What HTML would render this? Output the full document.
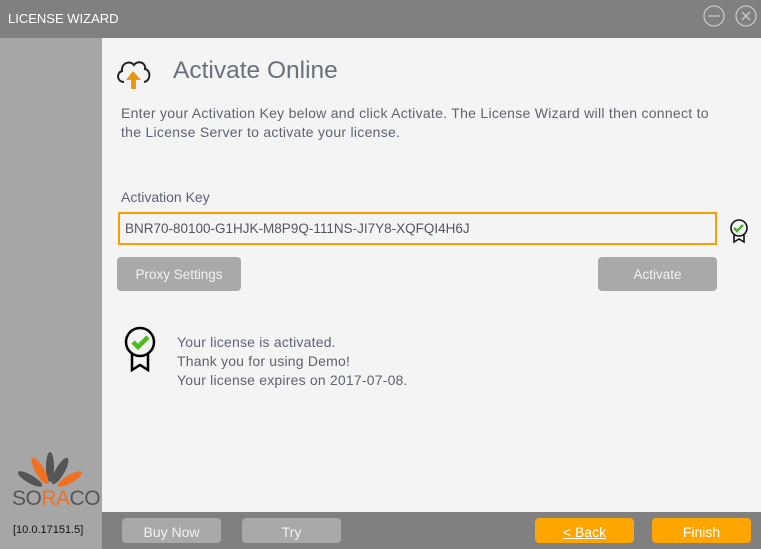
<!DOCTYPE html>
<html><head><style>
*{margin:0;padding:0;box-sizing:border-box}
body{width:761px;height:549px;overflow:hidden;background:#f4f4f4;font-family:"Liberation Sans",sans-serif;position:relative}
.abs{position:absolute}
.btn{position:absolute;background:#a9a9a9;border-radius:4px;color:#f2f2f2;font-size:13.5px;text-align:center}
.txt{color:#5f6270;font-size:13.5px}
</style></head><body>
<div class="abs" style="left:0;top:0;width:761px;height:38px;background:#808080"></div>
<div class="abs" style="left:8px;top:11px;color:#fff;font-size:13px">LICENSE WIZARD</div>
<svg class="abs" style="left:702px;top:5px" width="56" height="24">
<circle cx="12" cy="11" r="10" fill="none" stroke="#c8c8c8" stroke-width="1.3"/><line x1="6" y1="11" x2="18" y2="11" stroke="#c8c8c8" stroke-width="1.3"/>
<circle cx="44" cy="11" r="10" fill="none" stroke="#c8c8c8" stroke-width="1.3"/><path d="M40 7l8 8M48 7l-8 8" stroke="#c8c8c8" stroke-width="1.5"/>
</svg>
<div class="abs" style="left:0;top:38px;width:102px;height:511px;background:#a6a6a6"></div>
<div class="abs" style="left:102px;top:512px;width:659px;height:37px;background:#808080"></div>
<svg class="abs" style="left:115px;top:57px" width="38" height="34">
<path d="M9 25 C2 25 1 16 7 14 C6 6 15 3 19 8 C22 3 31 5 30 12 C36 13 36 24 29 25" fill="none" stroke="#222" stroke-width="2"/>
<path d="M18 14 L26 23 L21 23 L21 32 L16 32 L16 23 L11 23Z" fill="#e89a12"/>
</svg>
<div class="abs" style="left:173px;top:57px;font-size:24.5px;color:#6d6f7a">Activate Online</div>
<div class="abs txt" style="left:121px;top:104px;line-height:19px;font-size:14px;letter-spacing:0.28px">Enter your Activation Key below and click Activate. The License Wizard will then connect to<br>the License Server to activate your license.</div>
<div class="abs txt" style="left:121px;top:189px;font-size:14px">Activation Key</div>
<div class="abs" style="left:118px;top:212px;width:599px;height:33px;border:2px solid #f5a000;background:#f4f4f4"></div>
<div class="abs txt" style="left:125px;top:221px;color:#55575f">BNR70-80100-G1HJK-M8P9Q-111NS-JI7Y8-XQFQI4H6J</div>
<svg class="abs" style="left:728px;top:218px" width="24" height="26">
<circle cx="11" cy="10" r="8" fill="#f4f4f4" stroke="#111" stroke-width="1.6"/>
<path d="M6 10l3 3 6-6" stroke="#4caf2a" stroke-width="2.5" fill="none"/>
<path d="M6 17v7l5-3 5 3v-7" fill="none" stroke="#111" stroke-width="1.6"/>
</svg>
<div class="btn" style="left:117px;top:257px;width:124px;height:34px;line-height:36px">Proxy Settings</div>
<div class="btn" style="left:598px;top:257px;width:119px;height:34px;line-height:36px">Activate</div>
<svg class="abs" style="left:120px;top:321px" width="46" height="52">
<circle cx="20" cy="21" r="14" fill="#f4f4f4" stroke="#000" stroke-width="2.5"/>
<path d="M13 21l5 5 10-10" stroke="#4cbb1e" stroke-width="4.5" fill="none"/>
<path d="M12 33v16l8-5 8 5v-16" fill="none" stroke="#000" stroke-width="2.5"/>
</svg>
<div class="abs txt" style="left:177px;top:333px;line-height:19px;font-size:14px;letter-spacing:0.2px">Your license is activated.<br>Thank you for using Demo!<br>Your license expires on 2017-07-08.</div>
<svg class="abs" style="left:18px;top:450px" width="64" height="40">
<ellipse cx="32" cy="17" rx="4" ry="15" fill="#555"/>
<ellipse cx="22" cy="21" rx="4.5" ry="15" fill="#f07020" transform="rotate(-30 22 21)"/>
<ellipse cx="42" cy="21" rx="4.5" ry="15" fill="#555" transform="rotate(30 42 21)"/>
<ellipse cx="12" cy="29" rx="4" ry="14" fill="#555" transform="rotate(-60 12 29)"/>
<ellipse cx="52" cy="29" rx="4" ry="14" fill="#f07020" transform="rotate(60 52 29)"/>
</svg>
<div class="abs" style="left:12px;top:487px;font-size:21px;color:#555;letter-spacing:-0.5px">SO<span style="color:#f07020">RA</span>CO</div>
<div class="abs" style="left:13px;top:524px;font-size:11px;color:#111">[10.0.17151.5]</div>
<div class="btn" style="left:122px;top:518px;width:99px;height:25px;line-height:28px;font-size:14px">Buy Now</div>
<div class="btn" style="left:242px;top:518px;width:99px;height:25px;line-height:28px;font-size:14px">Try</div>
<div class="btn" style="left:535px;top:518px;width:99px;height:25px;line-height:28px;background:#ffa500;color:#fff;font-size:14px"><u>&lt; Back</u></div>
<div class="btn" style="left:652px;top:518px;width:99px;height:25px;line-height:28px;background:#ffa500;color:#fff;font-size:14px">Finish</div>
</body></html>
